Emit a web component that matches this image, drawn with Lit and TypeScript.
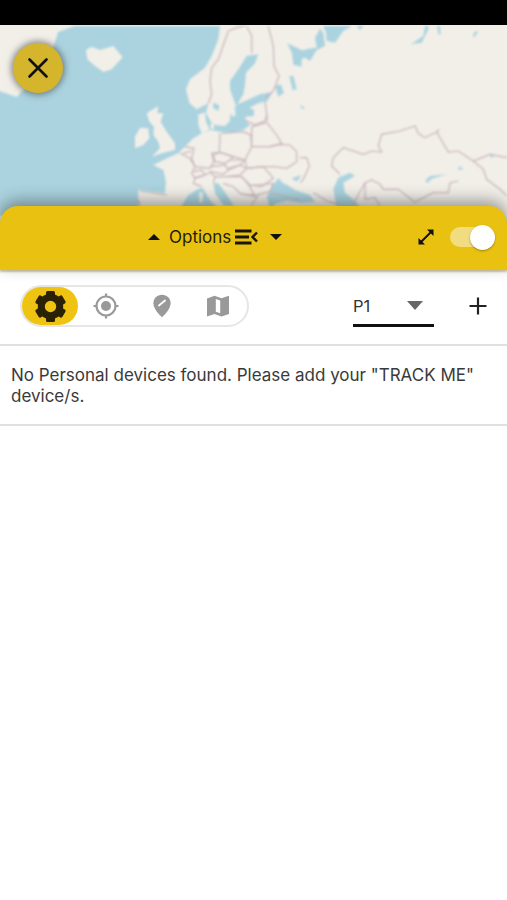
import { LitElement, html, css, svg } from "lit";
import { customElement } from "lit/decorators.js";

const S = 1 / 3;

/* Coordinates below are traced from 3x crops; each group sets its own origin. */
const SEA_A: string[] = [
  "-165,0 270,0 265,40 245,90 225,125 180,160 168,190 178,230 200,250 235,232 228,262 245,290 258,298 285,300 300,285 300,270 318,240 300,190 300,165 325,130 350,90 385,85 375,112 348,140 345,178 340,205 322,235 345,225 390,205 428,198 412,225 385,232 358,245 372,252 372,270 348,272 345,282 360,297 340,312 305,320 270,317 240,312 215,322 190,337 165,362 145,382 120,392 70,417 100,432 108,467 105,502 25,492 25,570 -420,570 -420,186 -339,213 -330,201 -255,147 -216,18",
  "435,180 452,175 462,200 445,212",
  "478,150 490,150 500,190 488,192",
  "472,52 515,72 515,122 490,116 486,82",
  "250,230 268,238 265,255 250,246",
];
const LAND_A: string[] = [
  "305,252 316,250 316,270 306,272",
  "205,265 225,262 228,285 212,288",
];
const BORDER_A: string[] = [
  "295,15 265,100 245,125 240,165 245,205 235,232",
  "295,15 320,5 345,0",
  "350,0 365,30 365,80",
  "415,0 430,60 432,120 447,150 430,195 405,215",
  "405,225 410,262 412,285",
];

const SEA_B: string[] = [
  "152,278 175,240 205,222 218,218 240,255 262,278",
  "250,205 265,205 285,232 312,272 282,272 255,235",
];
const LAND_B: string[] = [
  "50,-5 85,-27 82,-5 100,-5 92,20 110,50 135,85 135,105 95,115 65,125 90,100 85,80 70,60 72,35 58,20",
  "30,38 55,40 58,70 40,90 15,100 15,65",
  "205,0 225,-8 225,15 238,40 235,45 215,55 205,30",
  "242,25 252,25 252,42 242,42",
  "208,232 218,232 218,262 208,262",
];
const BORDER_B: string[] = [
  "365,35 410,22 440,60 455,85 420,95 365,95 365,65 365,35",
  "410,0 405,18 375,30 345,15",
  "275,55 340,50 362,60 365,95",
  "270,55 268,112 245,115 252,140 240,160 195,155 180,130 150,115",
  "270,112 310,125 345,135 365,95",
  "185,130 195,155 185,175 195,190 190,205 215,215",
  "30,228 110,240",
  "25,255 30,272",
  "165,95 192,100 185,130",
  "160,115 185,108",
  "250,120 270,112 310,125 300,135 285,145 255,140 250,120",
  "240,155 285,150 295,165 280,178 240,170",
  "300,135 345,135 330,150 295,160",
  "295,165 330,150 350,160 330,180 290,185",
  "420,95 450,88 480,90 500,110 500,140 470,160 430,155 400,155 350,160 345,135",
  "350,160 400,155 418,175 430,190 395,215 360,210 335,185",
  "360,212 430,205 420,230 385,238",
  "190,170 215,165 225,180 195,188",
  "195,190 225,180 240,172 255,185 250,205",
  "255,185 290,185 335,185 360,215 375,245 330,235 310,215 280,205",
  "335,238 385,240 365,270",
  "425,235 510,255",
];

const SEA_C: string[] = [
  "0,75 25,68 50,65 45,35 60,8 70,20 75,60 50,72 30,105 15,95 0,100",
  "70,0 155,0 130,15 105,50 80,45 78,20",
  "170,0 190,0 180,12",
  "330,55 365,50 385,10 385,0 375,0 370,30 340,50",
  "412,0 420,0 422,28 414,22",
  "518,28 528,14 534,16 524,34",
  "0,235 15,248 5,248",
  "100,490 115,455 150,440 165,450 130,470 135,500 165,525 182,545 110,545",
  "375,465 390,450 440,445 395,458 383,470",
  "478,420 490,430 475,432",
  "570,382 582,390 573,396",
];
const BORDER_C: string[] = [
  "120,445 95,420 100,395 130,365 190,385 215,375 245,378 235,360 245,325 300,315 345,300 355,322 375,335 410,318 445,378 475,375 520,405 570,385 621,395",
  "410,318 418,310",
  "520,405 550,430 560,460 600,490 621,510",
  "165,525 195,470 215,462 240,475 250,490 295,490 340,525",
  "195,470 195,520 225,515 240,540",
  "340,530 400,500 445,500 450,470 475,465",
  "0,395 20,395 28,420 10,460 0,470",
  "40,500 80,525 115,535",
];

const SEA_Z: string[] = [
  "800,590 815,560 835,535 850,550 862,555 885,570 930,585 945,605 905,608 860,603 830,610 810,622",
  "890,545 905,525 875,535",
];
const LAND_Z: string[] = [
  "258,150 275,140 300,150 340,138 368,172 335,208 310,216 285,198 262,178",
];

const GEAR_TEETH = [0, 60, 120, 180, 240, 300];

const sea = (list: string[]) => list.map((p) => svg`<polygon class="sea" points=${p}></polygon>`);
const land = (list: string[]) => list.map((p) => svg`<polygon class="land" points=${p}></polygon>`);
const border = (list: string[]) => list.map((p) => svg`<polyline class="border" points=${p}></polyline>`);

@customElement("app-root")
export class AppRoot extends LitElement {
  static styles = css`
    :host {
      display: block;
      width: 507px;
      height: 900px;
      overflow: hidden;
      background: #fff;
      font-family: Inter, "Liberation Sans", sans-serif;
      color: #333;
    }
    .status {
      height: 25px;
      background: #000;
    }
    .map {
      position: relative;
      height: 205px;
      background: #f2efe9;
      overflow: hidden;
    }
    .map-art {
      display: block;
      width: 517px;
      height: 205px;
      margin-left: -10px;
      filter: blur(0.9px);
    }
    .sea {
      fill: #aad3df;
    }
    .land {
      fill: #f2efe9;
    }
    .border {
      fill: none;
      stroke: #c8b4b9;
      stroke-width: 3.6;
    }
    .close {
      position: absolute;
      left: 13px;
      top: 18px;
      width: 50px;
      height: 50px;
      border-radius: 50%;
      background: #d5b52b;
      box-shadow: 0 0 6px 2px rgba(60, 60, 60, 0.55);
      display: flex;
      align-items: center;
      justify-content: center;
    }
    .panel {
      position: relative;
      margin-top: -24px;
      height: 64px;
      background: #e9c111;
      border-radius: 18px 18px 0 0;
      box-shadow: 0 -5px 16px rgba(40, 40, 40, 0.45), 0 2px 2px rgba(150, 130, 60, 0.45);
      display: flex;
      align-items: center;
      padding: 0 12px 2px 147px;
      box-sizing: border-box;
    }
    .opts {
      display: flex;
      align-items: center;
      font-size: 17px;
      color: #221c05;
    }
    .opts .label {
      margin: 0 4px 0 8px;
    }
    .opts .right {
      margin-left: 11px;
    }
    .tools {
      margin-left: auto;
      display: flex;
      align-items: center;
      gap: 15px;
    }
    .switch {
      position: relative;
      width: 45px;
      height: 20px;
      border-radius: 10px;
      background: #f1dd80;
    }
    .knob {
      position: absolute;
      right: 0;
      top: -2.5px;
      width: 25px;
      height: 25px;
      border-radius: 50%;
      background: #fff;
      box-shadow: 0 1px 2px rgba(90, 70, 0, 0.5);
    }
    .toolbar {
      display: flex;
      align-items: center;
      padding: 0 20px 2px 20px;
      box-sizing: border-box;
      height: 76px;
      border-bottom: 2px solid #e0e0e0;
    }
    .segments {
      width: 229px;
      height: 42px;
      box-sizing: border-box;
      border: 2px solid #e6e6e6;
      border-radius: 21px;
      display: grid;
      grid-template-columns: repeat(4, 56px);
      align-items: stretch;
    }
    .seg {
      display: flex;
      align-items: center;
      justify-content: center;
      border-radius: 19px;
    }
    .seg.on {
      background: #eec311;
    }
    .select {
      margin-left: auto;
      margin-top: 2px;
      width: 81px;
      height: 40px;
      box-sizing: border-box;
      border-bottom: 3px solid #111;
      display: flex;
      align-items: center;
      justify-content: space-between;
      font-size: 16.5px;
      color: #333;
      padding-right: 11px;
    }
    .plus {
      margin-left: 35px;
      display: flex;
    }
    .message {
      height: 80px;
      box-sizing: border-box;
      padding: 19px 11px 0;
      border-bottom: 2px solid #e0e0e0;
      font-size: 17px;
      line-height: 21px;
      color: #3a3a3a;
    }
    svg {
      display: block;
      flex: none;
    }
  `;

  private mapArt() {
    return svg`<svg class="map-art" viewBox="-10 25 517 205">
      <g transform="translate(130 26) scale(${S})">${sea(SEA_A)}${land(LAND_A)}</g>
      <g transform="translate(130 115) scale(${S})">${sea(SEA_B)}${land(LAND_B)}</g>
      <g transform="translate(300 26) scale(${S})">${sea(SEA_C)}</g>
      <g transform="scale(${S})">${sea(SEA_Z)}${land(LAND_Z)}</g>
      <g transform="translate(130 26) scale(${S})">${border(BORDER_A)}</g>
      <g transform="translate(130 115) scale(${S})">${border(BORDER_B)}</g>
      <g transform="translate(300 26) scale(${S})">${border(BORDER_C)}</g>
    </svg>`;
  }

  render() {
    return html`
      <div class="status"></div>
      <div class="map">
        ${this.mapArt()}
        <div class="close">
          <svg width="24" height="24" viewBox="0 0 24 24">
            <path d="M3.5 3.5 20.5 20.5M20.5 3.5 3.5 20.5" stroke="#111" stroke-width="2.6" stroke-linecap="round"></path>
          </svg>
        </div>
      </div>
      <div class="panel">
        <div class="opts">
          <svg width="14" height="8" viewBox="0 0 14 8"><path d="M7 1 13 7H1z" fill="#111"></path></svg>
          <span class="label">Options</span>
          <svg width="23" height="16" viewBox="0 0 23 16">
            <path d="M0 2H16.500M0 8H14M0 14H16.500" stroke="#1a1605" stroke-width="2.800"></path>
            <path d="M22 3.500 17.500 8l4.500 4.500" fill="none" stroke="#1a1605" stroke-width="2.400"></path>
          </svg>
          <svg class="right" width="14" height="8" viewBox="0 0 14 8"><path d="M1 1H13L7 7z" fill="#111"></path></svg>
        </div>
        <div class="tools">
          <svg width="18" height="18" viewBox="0 0 18 18">
            <path d="M4 14 14 4" stroke="#111" stroke-width="2"></path>
            <path d="M10 1.500H16.500V8zM1.500 10V16.500H8z" fill="#111"></path>
          </svg>
          <div class="switch"><div class="knob"></div></div>
        </div>
      </div>
      <div class="toolbar">
        <div class="segments">
          <div class="seg on">
            <svg width="33" height="33" viewBox="0 0 33 33">
              <circle cx="16.500" cy="16.500" r="9.200" fill="none" stroke="#2b2206" stroke-width="7"></circle>
              ${GEAR_TEETH.map(
                (a) => svg`<rect x="12" y="1" width="9" height="7" rx="1.500" fill="#2b2206" transform="rotate(${a} 16.500 16.500)"></rect>`,
              )}
            </svg>
          </div>
          <div class="seg">
            <svg width="28" height="28" viewBox="0 0 28 28">
              <circle cx="14" cy="14" r="9.500" fill="none" stroke="#999" stroke-width="2.200"></circle>
              <circle cx="14" cy="14" r="5" fill="#999"></circle>
              <path d="M14 1.500V5M14 23v3.500M1.500 14H5M23 14h3.500" stroke="#999" stroke-width="2.200"></path>
            </svg>
          </div>
          <div class="seg">
            <svg width="20" height="24" viewBox="0 0 20 24">
              <path d="M10 .8c5 0 8.600 3.700 8.600 8.400 0 5-4.600 10.200-8.600 14C6 19.400 1.400 14.200 1.400 9.200 1.400 4.500 5 .8 10 .8z" fill="#999"></path>
              <path d="M7 11.500 13 6.500" stroke="#fff" stroke-width="1.800" stroke-linecap="round"></path>
            </svg>
          </div>
          <div class="seg">
            <svg width="24" height="24" viewBox="0 0 24 24">
              <path
                fill="#999"
                fill-rule="evenodd"
                d="M1 4.500 8.500 1.800 15.500 4.300 23 1.800V20L15.500 22.500 8.500 20 1 22.500zM9.800 5V17.800L14.200 19.300V6.500z"
              ></path>
            </svg>
          </div>
        </div>
        <div class="select">
          <span>P1</span>
          <svg width="16" height="9" viewBox="0 0 16 9"><path d="M0 0H16L8 9z" fill="#666"></path></svg>
        </div>
        <div class="plus">
          <svg width="18" height="18" viewBox="0 0 18 18">
            <path d="M9 .5V17.500M.5 9H17.500" stroke="#222" stroke-width="2.200"></path>
          </svg>
        </div>
      </div>
      <div class="message">No Personal devices found. Please add your "TRACK ME" device/s.</div>
    `;
  }
}
